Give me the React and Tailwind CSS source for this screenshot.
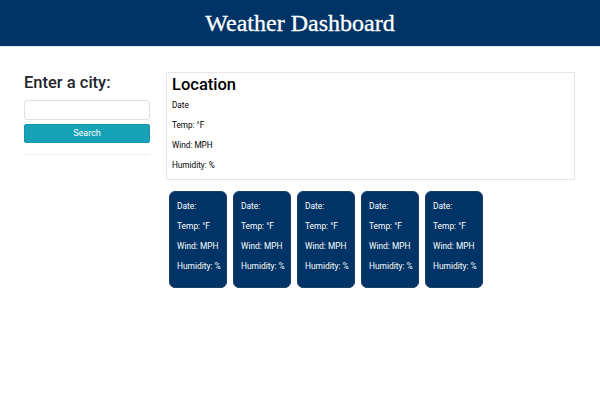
export default function App() {
  const cards = [0, 1, 2, 3, 4];
  return (
    <div className="min-h-[400px] bg-white" style={{ fontFamily: "Roboto, 'Liberation Sans', sans-serif" }}>
      <header className="h-[47px] bg-[#003366] border-b border-[#e5e7eb] flex items-center justify-center">
        <h1 className="text-white text-[24px] leading-none" style={{ fontFamily: "'Liberation Serif', serif", WebkitTextStroke: "0.3px white" }}>
          Weather Dashboard
        </h1>
      </header>
      <div className="flex pl-[24px] pr-[25px] pt-[25px] gap-[16px]">
        <aside className="w-[126px] shrink-0">
          <h2 className="text-[16.5px] leading-[22px] font-medium text-[#212529]">Enter a city:</h2>
          <input className="mt-[6px] block w-full h-[20px] border border-[#dee2e6] rounded-[3px] bg-white" />
          <button className="mt-[4px] block w-full h-[19px] bg-[#17a2b8] border border-[#1496aa] rounded-[2px] text-white text-[9px] leading-none">
            Search
          </button>
          <div className="mt-[11px] h-[1px] bg-[#eceeef]" />
        </aside>
        <main className="flex-1">
          <section className="border border-[#e6e6e6] h-[108px] pl-[5px]">
            <h2 className="text-[16.5px] leading-[22px] font-medium text-black mt-[1px]">Location</h2>
            <div className="text-[8.2px] text-black">
              <p className="leading-[12px] mt-[3px]">Date</p>
              <p className="leading-[12px] mt-[8px]">Temp: °F</p>
              <p className="leading-[12px] mt-[8px]">Wind: MPH</p>
              <p className="leading-[12px] mt-[8px]">Humidity: %</p>
            </div>
          </section>
          <div className="flex gap-[6px] mt-[11px] pl-[3px]">
            {cards.map((i) => (
              <div key={i} className="w-[58px] h-[97px] bg-[#003366] border border-[#1a3f66] rounded-[6px] pl-[7px] pt-[8px] text-white text-[8.4px]">
                <p className="leading-[12px]">Date:</p>
                <p className="leading-[12px] mt-[8px]">Temp: °F</p>
                <p className="leading-[12px] mt-[8px]">Wind: MPH</p>
                <p className="leading-[12px] mt-[8px]">Humidity: %</p>
              </div>
            ))}
          </div>
        </main>
      </div>
    </div>
  );
}
